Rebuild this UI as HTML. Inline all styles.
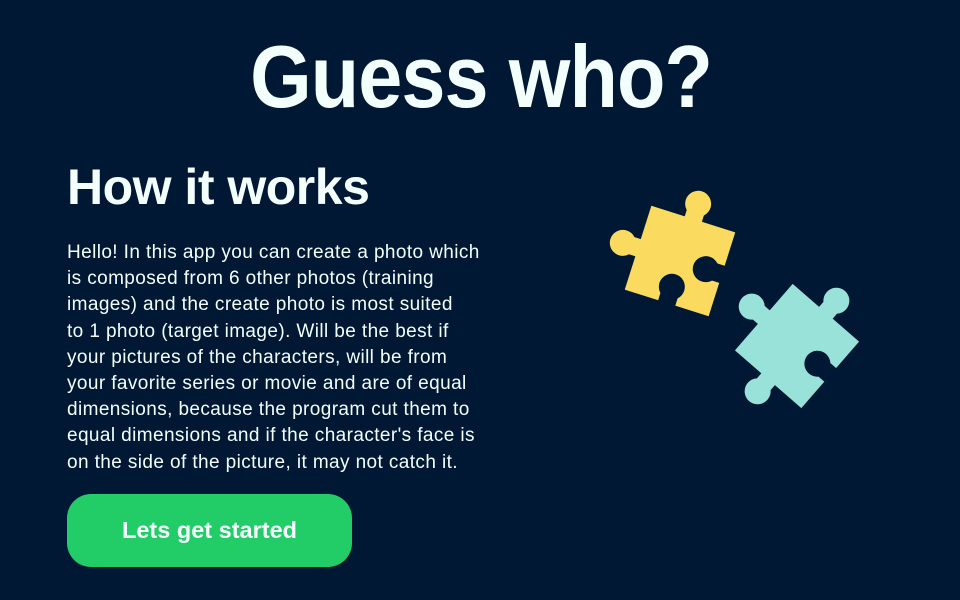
<!DOCTYPE html>
<html><head><style>
body{margin:0;width:960px;height:600px;background:#001833;overflow:hidden;font-family:"Liberation Sans",sans-serif;color:#f3fffd;position:relative}
h1{position:absolute;left:0;width:962px;text-align:center;top:26px;margin:0;font-size:88px;font-weight:bold;letter-spacing:-1px;transform:scaleX(0.9)}
h2{position:absolute;left:67px;top:158px;margin:0;font-size:50px;font-weight:bold;letter-spacing:-0.5px}
p{position:absolute;left:67px;top:240px;width:440px;margin:0;font-size:19px;line-height:26.2px;letter-spacing:0.4px;white-space:nowrap}
.btn{position:absolute;left:67px;top:494px;width:285px;height:73px;border-radius:24px;background:#22cc66;color:#f3fffd;font-weight:bold;font-size:23.5px;text-align:center;line-height:73px}
svg{position:absolute;left:0;top:0}
</style></head><body>
<h1>Guess who?</h1>
<h2>How it works</h2>
<p>Hello! In this app you can create a photo which<br>is composed from 6 other photos (training<br>images) and the create photo is most suited<br>to 1 photo (target image). Will be the best if<br>your pictures of the characters, will be from<br>your favorite series or movie and are of equal<br>dimensions, because the program cut them to<br>equal dimensions and if the character's face is<br>on the side of the picture, it may not catch it.</p>
<div class="btn">Lets get started</div>
<svg width="960" height="600">
<g transform="translate(680,261) rotate(17.6)">
<g fill="#fadb5f">
<rect x="-44" y="-44" width="88" height="88"/>
<rect x="-9" y="-56" width="18" height="14"/><circle cx="0" cy="-60" r="13"/>
<rect x="-56" y="-9" width="14" height="18"/><circle cx="-60" cy="0" r="13"/>
</g>
<g fill="#001833">
<rect x="30" y="-9" width="16" height="18"/><circle cx="27" cy="0" r="13"/>
<rect x="-9" y="30" width="18" height="16"/><circle cx="0" cy="27" r="13"/>
</g>
</g>
<g transform="translate(797,346) rotate(41)">
<g fill="#99e2da">
<rect x="-44" y="-44" width="88" height="88"/>
<rect x="-9" y="-56" width="18" height="14"/><circle cx="0" cy="-60" r="13"/>
<rect x="-56" y="-9" width="14" height="18"/><circle cx="-60" cy="0" r="13"/>
<rect x="-9" y="42" width="18" height="14"/><circle cx="0" cy="60" r="13"/>
</g>
<g fill="#001833">
<rect x="30" y="-9" width="16" height="18"/><circle cx="27" cy="0" r="13"/>
</g>
</g>
</svg>
</body></html>
